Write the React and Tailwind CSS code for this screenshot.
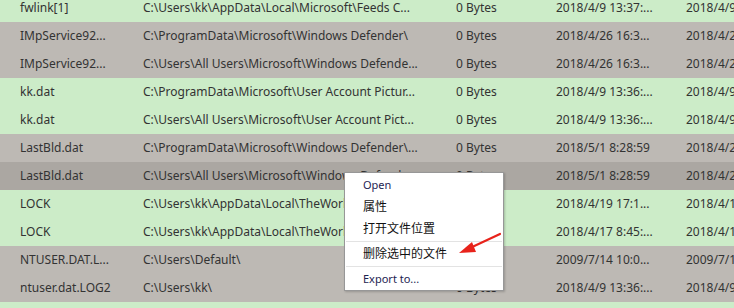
import React from "react";

const rows = [
  { name: "fwlink[1]", path: "C:\\Users\\kk\\AppData\\Local\\Microsoft\\Feeds C...", size: "0 Bytes", created: "2018/4/9 13:37:...", modified: "2018/4/9 13:37:...", tone: "green" },
  { name: "IMpService92...", path: "C:\\ProgramData\\Microsoft\\Windows Defender\\", size: "0 Bytes", created: "2018/4/26 16:3...", modified: "2018/4/26 16:3...", tone: "gray" },
  { name: "IMpService92...", path: "C:\\Users\\All Users\\Microsoft\\Windows Defende...", size: "0 Bytes", created: "2018/4/26 16:3...", modified: "2018/4/26 16:3...", tone: "gray" },
  { name: "kk.dat", path: "C:\\ProgramData\\Microsoft\\User Account Pictur...", size: "0 Bytes", created: "2018/4/9 13:36:...", modified: "2018/4/9 13:36:...", tone: "green" },
  { name: "kk.dat", path: "C:\\Users\\All Users\\Microsoft\\User Account Pict...", size: "0 Bytes", created: "2018/4/9 13:36:...", modified: "2018/4/9 13:36:...", tone: "green" },
  { name: "LastBld.dat", path: "C:\\ProgramData\\Microsoft\\Windows Defender\\...", size: "0 Bytes", created: "2018/5/1 8:28:59", modified: "2018/4/26 16:3...", tone: "gray" },
  { name: "LastBld.dat", path: "C:\\Users\\All Users\\Microsoft\\Windows Defende...", size: "0 Bytes", created: "2018/5/1 8:28:59", modified: "2018/4/26 16:3...", tone: "sel" },
  { name: "LOCK", path: "C:\\Users\\kk\\AppData\\Local\\TheWorld\\...", size: "0 Bytes", created: "2018/4/19 17:1...", modified: "2018/4/19 17:1...", tone: "green" },
  { name: "LOCK", path: "C:\\Users\\kk\\AppData\\Local\\TheWorld\\...", size: "0 Bytes", created: "2018/4/17 8:45:...", modified: "2018/4/17 8:45:...", tone: "green" },
  { name: "NTUSER.DAT.L...", path: "C:\\Users\\Default\\", size: "0 Bytes", created: "2009/7/14 10:0...", modified: "2009/7/14 10:0...", tone: "gray" },
  { name: "ntuser.dat.LOG2", path: "C:\\Users\\kk\\", size: "0 Bytes", created: "2018/4/9 13:36:...", modified: "2018/4/9 13:36:...", tone: "gray" },
  { name: "", path: "", size: "", created: "", modified: "", tone: "green" },
];

const toneClass = {
  green: "bg-[#ccecc8]",
  gray: "bg-[#bdb9b4]",
  sel: "bg-[#aba7a2]",
};

export default function App() {
  return (
    <div
      className="relative w-[734px] h-[308px] overflow-hidden bg-[#ccecc8] text-[12px] text-[#333]"
      style={{ fontFamily: '"Noto Sans", "Noto Sans CJK SC", sans-serif' }}
    >
      <div className="-mt-[6px]">
        {rows.map((r, i) => (
          <div key={i} className={`flex items-center h-[28px] whitespace-nowrap ${toneClass[r.tone]}`}>
            <div className="w-[143px] pl-[20px] shrink-0">{r.name}</div>
            <div className="w-[313px] shrink-0 overflow-hidden">{r.path}</div>
            <div className="w-[100px] shrink-0">{r.size}</div>
            <div className="w-[130px] shrink-0">{r.created}</div>
            <div className="shrink-0">{r.modified}</div>
          </div>
        ))}
      </div>

      {/* context menu */}
      <div className="absolute left-[344px] top-[172px] w-[160px] h-[119px] bg-white border border-[#979797] shadow-[1px_1px_2px_rgba(0,0,0,0.2)] pt-[1px] text-[#111]">
        <div className="h-[22px] flex items-center pl-[18px] text-[#1e2452] text-[11px]">Open</div>
        <div className="h-[22px] flex items-center pl-[18px]">属性</div>
        <div className="h-[22px] flex items-center pl-[18px]">打开文件位置</div>
        <div className="my-[1px] mx-[1px] h-px bg-[#e3e3e3]" />
        <div className="h-[22px] flex items-center pl-[18px]">删除选中的文件</div>
        <div className="my-[1px] mx-[1px] h-px bg-[#e3e3e3]" />
        <div className="h-[22px] flex items-center pl-[18px] text-[#1e2452] text-[11px]">Export to...</div>
      </div>

      {/* red arrow */}
      <svg className="absolute left-[450px] top-[225px]" width="60" height="35" viewBox="0 0 60 35">
        <line x1="50" y1="9" x2="20" y2="23" stroke="#e8231b" strokeWidth="2.2" strokeLinecap="round" />
        <polygon points="9,28 22,17 26,27" fill="#e8231b" />
      </svg>
    </div>
  );
}
